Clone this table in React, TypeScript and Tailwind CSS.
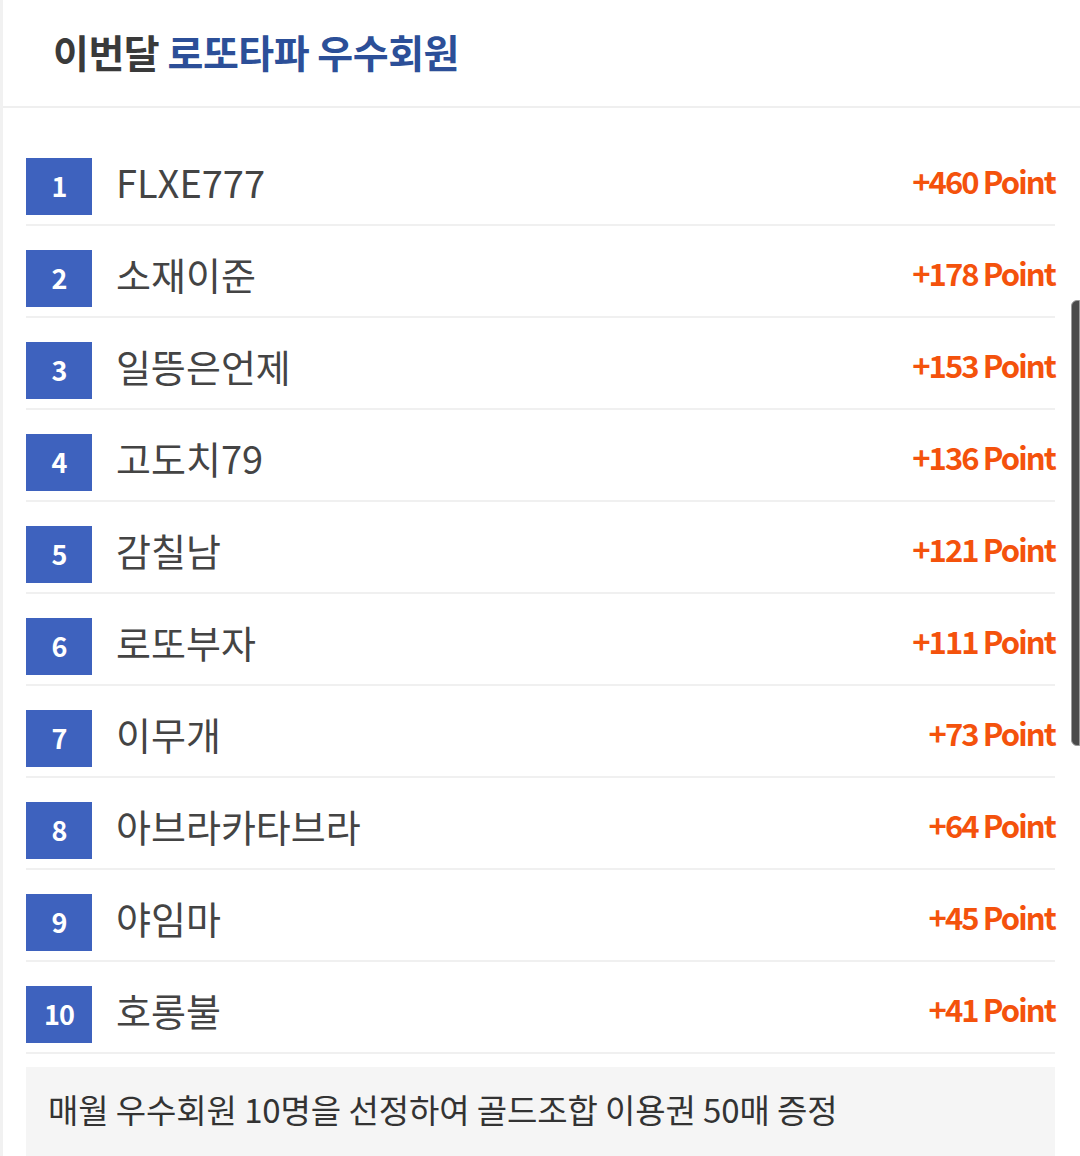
const members = [
  { rank: 1, name: "FLXE777", point: 460 },
  { rank: 2, name: "소재이준", point: 178 },
  { rank: 3, name: "일뜽은언제", point: 153 },
  { rank: 4, name: "고도치79", point: 136 },
  { rank: 5, name: "감칠남", point: 121 },
  { rank: 6, name: "로또부자", point: 111 },
  { rank: 7, name: "이무개", point: 73 },
  { rank: 8, name: "아브라카타브라", point: 64 },
  { rank: 9, name: "야임마", point: 45 },
  { rank: 10, name: "호롱불", point: 41 },
];

const font = { fontFamily: '"Noto Sans CJK KR", "Noto Sans", sans-serif' };

export default function App() {
  return (
    <div
      className="relative w-[1080px] h-[1156px] overflow-hidden bg-white border-l-[3px] border-[#f1f1f1]"
      style={font}
    >
      <header className="h-[108px] flex items-center pl-[50px] pb-[4px] border-b-2 border-[#efefef]">
        <h1 className="text-[39px] font-bold tracking-[-0.5px] text-[#3a3a3a] leading-none">
          이번달 <span className="text-[#2c4f98]">로또타파 우수회원</span>
        </h1>
      </header>

      <ul className="pl-[23px] pr-[25px] pt-[26px]">
        {members.map((m) => (
          <li
            key={m.rank}
            className="flex items-center pt-[24px] pb-[9px] border-b-2 border-[#f0f0f0]"
          >
            <span className="w-[66px] h-[57px] flex items-center justify-center bg-[#3e62be] text-white text-[27px] font-bold tracking-[-1px]">
              {m.rank}
            </span>
            <span className="ml-[24px] flex-1 text-[38px] text-[#444] leading-none -mt-[10px]">
              {m.name}
            </span>
            <span className="text-[31px] font-bold text-[#f4520c] tracking-[-1.9px] leading-none -mt-[12px]">
              +{m.point} Point
            </span>
          </li>
        ))}
      </ul>

      <div className="ml-[23px] mr-[25px] mt-[13px] bg-[#f5f5f5] pl-[22px] pt-[20px] pb-[40px]">
        <p className="text-[33px] text-[#333] leading-[44px] tracking-[-0.1px]">
          매월 우수회원 10명을 선정하여 골드조합 이용권 50매 증정
        </p>
      </div>

      <div className="absolute right-0 top-[300px] w-[9px] h-[446px] bg-[#4a4a4a] rounded-l-[6px] border border-[#9a9a9a]" />
    </div>
  );
}
